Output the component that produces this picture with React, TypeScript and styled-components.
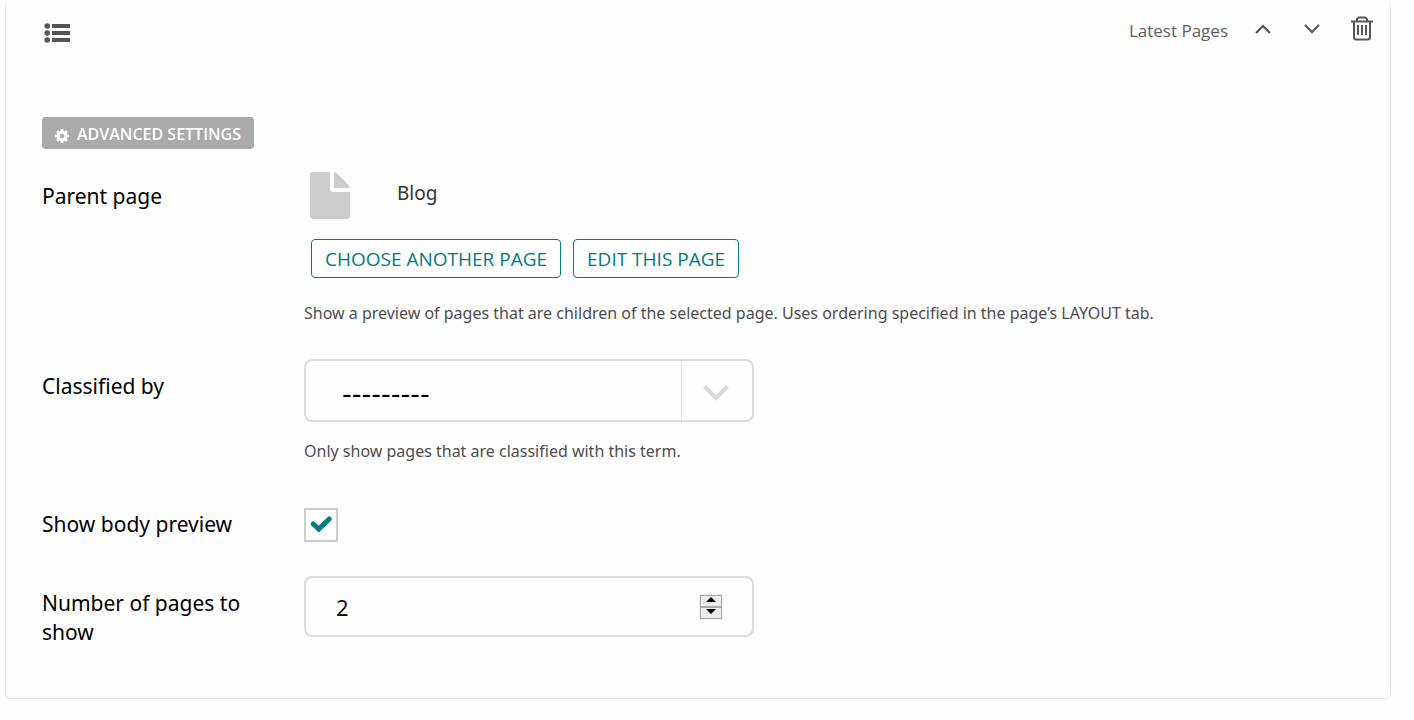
import React, { useState } from 'react';
import styled, { createGlobalStyle } from 'styled-components';

const GlobalStyle = createGlobalStyle`
  *, *::before, *::after { box-sizing: border-box; }
  body {
    margin: 0;
    background: #fefefe;
    color: #000;
    font-family: "Noto Sans", "Open Sans", sans-serif;
  }
  button, input, select { font-family: "Open Sans", "Noto Sans", sans-serif; }
`;

const Card = styled.section`
  margin: 0 23px 21px 5px;
  padding: 0 17px 51px 36px;
  border: 1px solid #e6e6e6;
  border-top: 0;
  border-radius: 5px;
`;

const Header = styled.header`
  display: flex;
  align-items: center;
  justify-content: space-between;
  height: 60px;
`;

const BlockIcon = styled.svg`
  display: block;
  margin: 5px 0 0 2px;
`;

const Actions = styled.div`
  display: flex;
  align-items: center;
`;

const BlockType = styled.span`
  margin: 2px 27px 0 0;
  font-family: "Open Sans", "Noto Sans", sans-serif;
  font-size: 17px;
  line-height: 24px;
  color: #606060;
`;

const IconButton = styled.button<{ $gap?: number }>`
  display: flex;
  margin: 0 ${(p) => p.$gap ?? 0}px 3px 0;
  padding: 0;
  border: 0;
  background: none;
  color: #585858;
  cursor: pointer;
`;

const SettingsButton = styled.button`
  display: flex;
  align-items: center;
  gap: 8px;
  height: 32px;
  margin: 57px 0 23px;
  padding: 2px 13px 0;
  border: 0;
  border-radius: 4px;
  background: #aaa;
  color: #fff;
  font-size: 16px;
  font-weight: 600;
  line-height: 24px;
  text-transform: uppercase;
  cursor: pointer;

  svg { margin-top: 3px; }
`;

const Field = styled.div<{ $gap?: number }>`
  display: grid;
  grid-template-columns: 210px minmax(0, 1fr);
  column-gap: 52px;
  margin-bottom: ${(p) => p.$gap ?? 0}px;
`;

const labelStyle = `
  font-size: 21px;
  line-height: 29px;
  color: #000;
`;

const Label = styled.label<{ $top: number }>`
  ${labelStyle}
  padding-top: ${(p) => p.$top}px;
`;

const GroupLabel = styled.span`
  ${labelStyle}
  padding-top: 10px;
`;

const Help = styled.p<{ $top: number }>`
  margin: ${(p) => p.$top}px 0 0;
  font-size: 16px;
  line-height: 24px;
  color: #4d4d4d;
`;

const ChosenPage = styled.div`
  display: flex;
  gap: 47px;
  margin-left: 6px;
`;

const PageTitle = styled.span`
  padding-top: 8px;
  font-size: 19px;
  line-height: 26px;
  color: #333;
`;

const ButtonRow = styled.div`
  display: flex;
  flex-wrap: wrap;
  gap: 12px;
  margin: 20px 0 0 7px;
`;

const OutlineButton = styled.button`
  height: 39px;
  padding: 0 13px;
  border: 1px solid #007d7e;
  border-radius: 4px;
  background: transparent;
  color: #007d7e;
  font-size: 19px;
  line-height: 24px;
  text-transform: uppercase;
  cursor: pointer;
`;

const Control = styled.div`
  position: relative;
  width: 100%;
  max-width: 450px;
`;

const Select = styled.select`
  display: block;
  width: 100%;
  height: 63px;
  padding: 5px 80px 0 36px;
  border: 2px solid #dcdcdc;
  border-radius: 8px;
  appearance: none;
  background: transparent;
  color: #000;
  font-family: "DejaVu Sans", sans-serif;
  font-size: 27px;
`;

const SelectArrow = styled.span`
  position: absolute;
  top: 2px;
  right: 2px;
  bottom: 2px;
  display: flex;
  align-items: center;
  justify-content: center;
  width: 71px;
  padding: 4px 2px 0 0;
  border-left: 1px solid #e6e6e6;
  pointer-events: none;
`;

const CheckControl = styled.div`
  position: relative;
  width: 34px;
  height: 34px;

  svg {
    position: absolute;
    top: 8px;
    left: 6px;
    pointer-events: none;
  }
`;

const Checkbox = styled.input`
  display: block;
  width: 34px;
  height: 34px;
  margin: 0;
  border: 2px solid #ccc;
  appearance: none;
  background: #fff;
`;

const NumberInput = styled.input`
  display: block;
  width: 100%;
  height: 61px;
  padding: 0 60px 0 30px;
  border: 2px solid #dcdcdc;
  border-radius: 8px;
  appearance: textfield;
  background: transparent;
  color: #000;
  font-size: 22px;

  &::-webkit-inner-spin-button { appearance: none; margin: 0; }
`;

const Spinner = styled.div`
  position: absolute;
  top: 18px;
  right: 31px;
  display: flex;
  flex-direction: column;
  width: 24px;
  border: 1px solid #f0f0f0;
`;

const SpinButton = styled.button`
  display: flex;
  align-items: flex-start;
  justify-content: center;
  height: 12px;
  padding: 1px 1px 0 0;
  border: 1px solid #a8a8a8;
  background: #ececec;
  cursor: pointer;
`;

export default function App() {
  const [preview, setPreview] = useState(true);
  const [count, setCount] = useState(2);

  return (
    <>
      <GlobalStyle />
      <Card>
        <Header>
          <BlockIcon width="26" height="20" viewBox="0 0 26 20" fill="#555" aria-hidden="true">
            <circle cx="3.2" cy="3" r="2.8" />
            <circle cx="3.2" cy="10" r="2.8" />
            <circle cx="3.2" cy="17" r="2.8" />
            <path d="M8 1h18v4H8zM8 8h18v4H8zM8 15h18v4H8z" />
          </BlockIcon>
          <Actions>
            <BlockType>Latest Pages</BlockType>
            <IconButton type="button" aria-label="Move up" $gap={33}>
              <svg width="16" height="10" viewBox="0 0 16 10" fill="none" stroke="currentColor" strokeWidth="2.2">
                <path d="M1 9l7-7 7 7" />
              </svg>
            </IconButton>
            <IconButton type="button" aria-label="Move down" $gap={31}>
              <svg width="16" height="10" viewBox="0 0 16 10" fill="none" stroke="currentColor" strokeWidth="2.2">
                <path d="M1 1l7 7 7-7" />
              </svg>
            </IconButton>
            <IconButton type="button" aria-label="Delete">
              <svg width="22" height="25" viewBox="0 0 22 25" fill="none" stroke="currentColor" strokeWidth="2">
                <path d="M0 5.5h22M6 5.5V4c0-2 1-2.6 2.500-2.600h5C15 1.400 16 2 16 4v1.500M3 5.500V21c0 1.600.8 2.600 2.400 2.600h11.200c1.600 0 2.400-1 2.400-2.600V5.500" />
                <path d="M7 9v10M11 9v10M15 9v10" />
              </svg>
            </IconButton>
          </Actions>
        </Header>

        <SettingsButton type="button">
          <svg width="14" height="14" viewBox="0 0 14 14" aria-hidden="true">
            <g fill="#fff">
              <circle cx="7" cy="7" r="5.300" />
              <path d="M5.700 0h2.600l.5 3H5.200zM5.700 14h2.600l.5-3H5.200zM0 5.700v2.600l3 .5V5.200zM14 5.700v2.600l-3 .5V5.200z" />
              <path d="M5.700 0h2.600l.5 3H5.200zM5.700 14h2.600l.5-3H5.200zM0 5.700v2.600l3 .5V5.200zM14 5.700v2.600l-3 .5V5.200z" transform="rotate(45 7 7)" />
            </g>
            <circle cx="7" cy="7" r="2.300" fill="#aaa" />
          </svg>
          Advanced settings
        </SettingsButton>

        <Field $gap={34} role="group" aria-labelledby="parent-label">
          <GroupLabel id="parent-label">Parent page</GroupLabel>
          <div>
            <ChosenPage>
              <svg width="40" height="47" viewBox="0 0 40 47" fill="#ccc" aria-hidden="true">
                <path d="M3 0h17v17a3 3 0 0 0 3 3h17v24a3 3 0 0 1-3 3H3a3 3 0 0 1-3-3V3a3 3 0 0 1 3-3z" />
                <path d="M24 0c1.500.2 2.400.8 3.400 1.800l10 10c1 1 1.800 2.300 2 4.200H24z" />
              </svg>
              <PageTitle>Blog</PageTitle>
            </ChosenPage>
            <ButtonRow>
              <OutlineButton type="button">Choose another page</OutlineButton>
              <OutlineButton type="button">Edit this page</OutlineButton>
            </ButtonRow>
            <Help $top={23}>
              Show a preview of pages that are children of the selected page. Uses ordering specified in the page’s LAYOUT tab.
            </Help>
          </div>
        </Field>

        <Field $gap={45}>
          <Label $top={13} htmlFor="classified">Classified by</Label>
          <div>
            <Control>
              <Select id="classified" defaultValue="">
                <option value="">---------</option>
              </Select>
              <SelectArrow aria-hidden="true">
                <svg width="26" height="16" viewBox="0 0 26 16" fill="none" stroke="#d9d9d9" strokeWidth="4">
                  <path d="M1.500 1.500L13 13 24.500 1.500" />
                </svg>
              </SelectArrow>
            </Control>
            <Help $top={17}>Only show pages that are classified with this term.</Help>
          </div>
        </Field>

        <Field $gap={34}>
          <Label $top={2} htmlFor="preview">Show body preview</Label>
          <CheckControl>
            <Checkbox id="preview" type="checkbox" checked={preview} onChange={(e) => setPreview(e.target.checked)} />
            {preview && (
              <svg width="22" height="17" viewBox="0 0 22 17" fill="none" stroke="#007d7e" strokeWidth="5" aria-hidden="true">
                <path d="M3.300 8l5.500 5L19.200 3" strokeLinejoin="miter" strokeLinecap="round" />
              </svg>
            )}
          </CheckControl>
        </Field>

        <Field>
          <Label $top={13} htmlFor="count">Number of pages to show</Label>
          <Control>
            <NumberInput id="count" type="number" value={count} onChange={(e) => setCount(Number(e.target.value))} />
            <Spinner>
              <SpinButton type="button" aria-label="Increase" onClick={() => setCount(count + 1)}>
                <svg width="10" height="5" viewBox="0 0 10 5"><path d="M5 0l5 5H0z" /></svg>
              </SpinButton>
              <SpinButton type="button" aria-label="Decrease" onClick={() => setCount(count - 1)}>
                <svg width="10" height="5" viewBox="0 0 10 5"><path d="M5 5l5-5H0z" /></svg>
              </SpinButton>
            </Spinner>
          </Control>
        </Field>
      </Card>
    </>
  );
}
